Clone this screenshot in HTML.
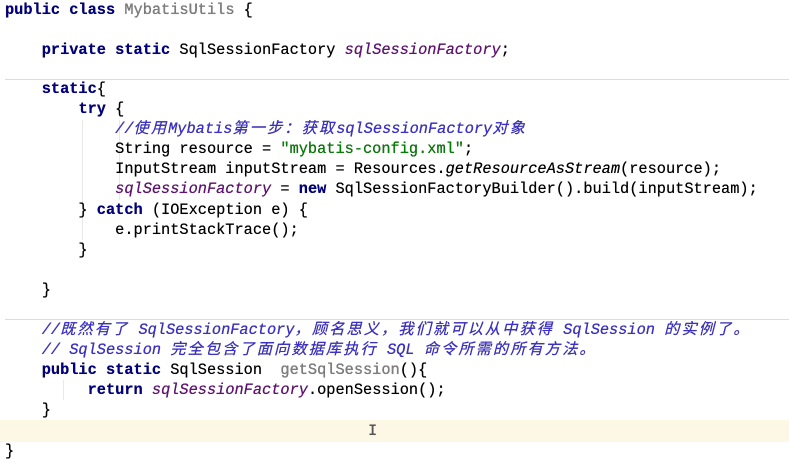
<!DOCTYPE html>
<html><head><meta charset="utf-8"><style>
html,body{margin:0;padding:0;background:#fff;width:789px;height:471px;overflow:hidden;position:relative}
.l{position:absolute;left:5px;height:20px;line-height:20px;white-space:pre;font-family:"Liberation Mono","Noto Sans CJK SC",monospace;font-size:15.3px;color:#000;text-shadow:0 0 0.4px #000}
.k{color:#000080;font-weight:bold}
.f{color:#660e7a;font-style:italic}
.c{color:#3b2fd4;font-style:italic}
.c b{font-weight:normal;letter-spacing:2px}
.s{color:#008000}
.g{color:#808080}
.i{font-style:italic}
.sep{position:absolute;left:5px;right:0;height:1px;background:#dcdcdc}
.hl{position:absolute;left:0;right:0;top:420px;height:22px;background:#fdf8e6}
.gd{position:absolute;width:1px;background:#e8e8e8}
</style></head><body>
<div class="hl"></div>
<div class="sep" style="top:79px"></div>
<div class="sep" style="top:319px"></div>
<div class="gd" style="left:82px;top:120px;height:120px"></div>
<div class="gd" style="left:119px;top:120px;height:80px"></div>
<div class="gd" style="left:63px;top:380px;height:20px"></div>
<div class="l" style="top:0px"><span class="k">public class </span><span class="g">MybatisUtils</span> {</div>
<div class="l" style="top:40px">    <span class="k">private static </span>SqlSessionFactory <span class="f">sqlSessionFactory</span>;</div>
<div class="l" style="top:79px">    <span class="k">static</span>{</div>
<div class="l" style="top:99px">        <span class="k">try</span> {</div>
<div class="l" style="top:119px">            <span class="c">//<b>使用</b>Mybatis<b>第一步：获取</b>sqlSessionFactory<b>对象</b></span></div>
<div class="l" style="top:139px">            String resource = <span class="s">"mybatis-config.xml"</span>;</div>
<div class="l" style="top:159px">            InputStream inputStream = Resources.<span class="i">getResourceAsStream</span>(resource);</div>
<div class="l" style="top:179px">            <span class="f">sqlSessionFactory</span> = <span class="k">new</span> SqlSessionFactoryBuilder().build(inputStream);</div>
<div class="l" style="top:200px">        } <span class="k">catch</span> (IOException e) {</div>
<div class="l" style="top:220px">            e.printStackTrace();</div>
<div class="l" style="top:240px">        }</div>
<div class="l" style="top:280px">    }</div>
<div class="l" style="top:320px">    <span class="c">//<b>既然有了</b> SqlSessionFactory<b>，顾名思义，我们就可以从中获得</b> SqlSession <b>的实例了。</b></span></div>
<div class="l" style="top:340px">    <span class="c">// SqlSession <b>完全包含了面向数据库执行</b> SQL <b>命令所需的所有方法。</b></span></div>
<div class="l" style="top:360px">    <span class="k">public static </span>SqlSession  <span class="g">getSqlSession</span>(){</div>
<div class="l" style="top:380px">         <span class="k">return </span><span class="f">sqlSessionFactory</span>.openSession();</div>
<div class="l" style="top:400px">    }</div>
<div class="l" style="top:421px;left:368px;color:#555">I</div>
<div class="l" style="top:441px">}</div>
</body></html>
